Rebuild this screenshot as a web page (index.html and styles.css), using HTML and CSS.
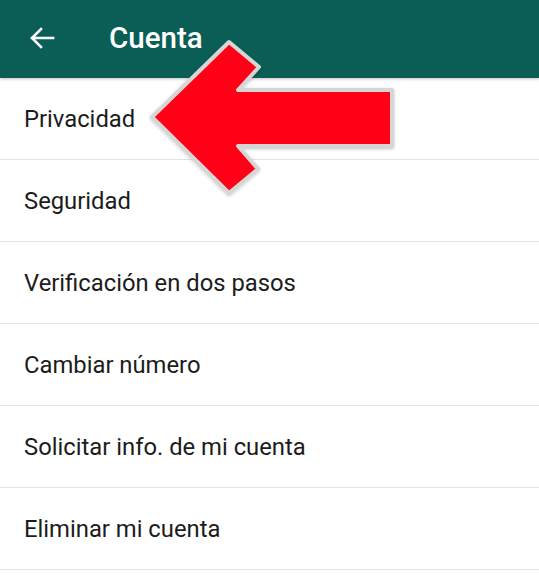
FILE: index.html
```html
<!DOCTYPE html>
<html lang="es">
<head>
<meta charset="utf-8">
<title>Cuenta</title>
<link rel="stylesheet" href="styles.css">
</head>
<body>
<div class="screen">
  <header class="appbar">
    <svg class="back" width="26" height="22" viewBox="0 0 26 22">
      <path d="M24 11H3M12 2L3 11l9 9" fill="none" stroke="#fff" stroke-width="2.6" stroke-linecap="square"/>
    </svg>
    <h1 class="title">Cuenta</h1>
  </header>
  <ul class="list">
    <li class="row">Privacidad</li>
    <li class="row">Seguridad</li>
    <li class="row">Verificación en dos pasos</li>
    <li class="row">Cambiar número</li>
    <li class="row">Solicitar info. de mi cuenta</li>
    <li class="row">Eliminar mi cuenta</li>
  </ul>
  <svg class="pointer" width="539" height="577" viewBox="0 0 539 577">
    <defs>
      <filter id="sh" x="-10%" y="-10%" width="120%" height="120%">
        <feDropShadow dx="0" dy="1" stdDeviation="1.5" flood-color="#000" flood-opacity="0.25"/>
      </filter>
    </defs>
    <polygon points="152,117 229,42 259,67 238,90 392,90 392,146 238,146 258,169 229,193"
      fill="#ff0013" stroke="#d6d6d6" stroke-width="4" stroke-linejoin="round" filter="url(#sh)"/>
  </svg>
</div>
</body>
</html>
```
FILE: styles.css
```css
html, body {
  margin: 0;
  padding: 0;
  background: #fff;
}
.screen {
  position: relative;
  width: 539px;
  height: 577px;
  overflow: hidden;
  font-family: Roboto, "Liberation Sans", sans-serif;
}
.appbar {
  height: 78px;
  background: #0a5e55;
  display: flex;
  align-items: center;
  box-shadow: 0 1px 3px rgba(0,0,0,0.25);
  position: relative;
  z-index: 1;
}
.back {
  margin-left: 29px;
  margin-top: -2px;
}
.title {
  margin: -3px 0 0 54px;
  color: #fff;
  font-size: 29.5px;
  font-weight: 500;
}
.list {
  list-style: none;
  margin: 0;
  padding: 0;
}
.row {
  height: 81px;
  border-bottom: 1px solid #e2e2e2;
  display: flex;
  align-items: center;
  padding-left: 24px;
  font-size: 23.8px;
  color: #1c1c1c;
}
.pointer {
  position: absolute;
  left: 0;
  top: 0;
  z-index: 2;
}
```
